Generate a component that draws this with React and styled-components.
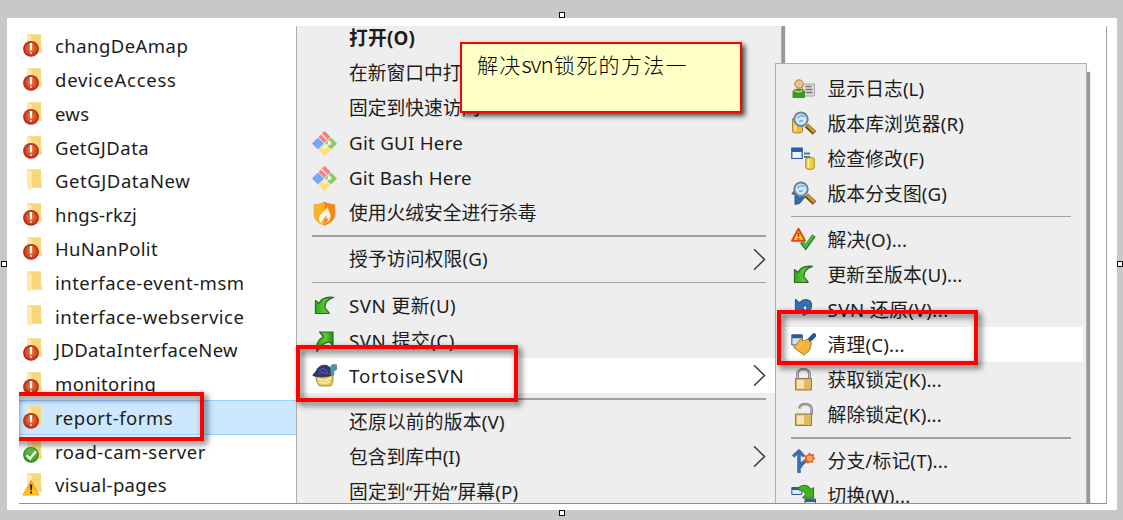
import React from "react";
import styled, { createGlobalStyle, css } from "styled-components";

const Global = createGlobalStyle`
  * { box-sizing: border-box; }
  html, body { margin: 0; padding: 0; background: #c8c8c8; }
  body { font-family: "Noto Sans", "Noto Sans CJK SC", sans-serif; color: #1c1c1c; overflow: hidden; }
  svg { display: block; flex: none; }
`;

const Editor = styled.main`
  position: relative;
  width: 1123px;
  height: 520px;
  padding: 18px 6px 10px 7px;
  background: #c8c8c8;
  overflow: hidden;
`;

const Canvas = styled.div`
  height: 492px;
  padding: 8px 10px 6px 12px;
  background: #fff;
`;

const Capture = styled.section`
  position: relative;
  width: 1088px;
  height: 478px;
  border-right: 1px solid #a0a0a0;
  border-bottom: 1px solid #8f8f8f;
  background: #fff;
  overflow: hidden;
`;

const Handle = styled.i`
  position: absolute;
  left: ${(p) => p.$x}px;
  top: ${(p) => p.$y}px;
  width: 6px;
  height: 6px;
  border: 1px solid #111;
  background: #fff;
`;

const FolderList = styled.ul`
  width: 277px;
  margin: 0;
  padding: 2.5px 0 0;
  list-style: none;
`;

const FolderRow = styled.li`
  display: flex;
  align-items: center;
  gap: 11px;
  height: 33.77px;
  padding-left: 3px;
  border: solid transparent;
  border-width: 1px 0;
  ${(p) => p.$selected && css`
    height: 35px;
    margin-bottom: -1.23px;
    background: #cce8ff;
    border-color: #99d1ff;
  `}
`;

const FolderName = styled.span`
  font-size: 18.5px;
  line-height: 30px;
  white-space: nowrap;
  letter-spacing: ${(p) => p.$track || 0}px;
  transform: translateY(0.9px);
`;

const Menu = styled.div`
  position: absolute;
  left: ${(p) => p.$x}px;
  top: ${(p) => p.$y}px;
  width: ${(p) => p.$w}px;
  height: 560px;
  padding: ${(p) => p.$lead}px 3px;
  background: #eeeeee;
  border: 1.5px solid #b0b0b0;
  box-shadow: 3px 9px 1px 0 #999;
`;

const MenuRow = styled.div`
  display: flex;
  align-items: center;
  height: 35px;
  padding: 0 ${(p) => p.$end}px 0 12px;
  background: ${(p) => (p.$active ? "#fff" : "transparent")};
`;

const IconSlot = styled.span`
  display: flex;
  width: 25px;
  height: 25px;
  margin-right: 12px;
`;

const MenuText = styled.span`
  flex: 1;
  font-size: 18.75px;
  line-height: 30px;
  white-space: nowrap;
  font-weight: ${(p) => (p.$bold ? 700 : 400)};
  letter-spacing: ${(p) => p.$track || 0}px;
`;

const Divider = styled.div`
  display: flex;
  align-items: center;
  height: 11.33px;
  padding: 0 ${(p) => p.$end}px 0 12px;
  &::before { content: ""; flex: 1; height: 1.5px; background: #a2a2a2; }
`;

const RedFrame = styled.div`
  position: absolute;
  left: ${(p) => p.$x}px;
  top: ${(p) => p.$y}px;
  width: ${(p) => p.$w}px;
  height: ${(p) => p.$h}px;
  border: 4px solid #fe0000;
  filter: drop-shadow(3px 3px 3px rgba(0, 0, 0, 0.65));
`;

const Note = styled.div`
  position: absolute;
  left: 441px;
  top: 16px;
  width: 282px;
  height: 71px;
  padding: 5px 15px;
  border: 2.5px solid #f00;
  background: #ffffc8;
  box-shadow: 3px 3px 5px rgba(0, 0, 0, 0.7);
  font-family: "Noto Sans CJK SC", sans-serif;
  font-weight: 300;
  font-size: 21px;
  line-height: 30px;
  letter-spacing: 1.3px;
  white-space: nowrap;
  color: #000;
`;

const NoteLatin = styled.span`
  font-size: 22.5px;
  line-height: 1;
  letter-spacing: -1.2px;
  margin-right: 1.5px;
`;

const Badge = ({ kind }) => {
  if (kind === "modified")
    return (
      <>
        <circle cx="9" cy="15.8" r="7.9" fill="#b52b1b" />
        <circle cx="9" cy="15.8" r="6.6" fill="url(#redBall)" />
        <path d="M7.7 10h2.600l-.5 7.6H8.200z" fill="#fff" />
        <circle cx="9" cy="20" r="1.1" fill="#f3d6cf" />
      </>
    );
  if (kind === "normal")
    return (
      <>
        <circle cx="9" cy="15.8" r="7.9" fill="#2c8a1c" />
        <circle cx="9" cy="15.8" r="6.7" fill="url(#greenBall)" />
        <path d="M4.6 16.2l3.4 3.6 6-7.6" fill="none" stroke="#fff" strokeWidth="2.3" />
      </>
    );
  if (kind === "conflict")
    return (
      <>
        <path d="M9 8.5L17 23H1z" fill="url(#warnTri)" stroke="#e0960c" strokeWidth=".8" strokeLinejoin="round" />
        <path d="M8 12.5h2.2l-.4 6H8.4z" fill="#2a1c00" />
        <circle cx="9.1" cy="20.6" r="1.1" fill="#2a1c00" />
      </>
    );
  return null;
};

const FolderIcon = ({ kind }) => (
  <svg width="22" height="24" viewBox="0 0 22 24">
    <defs>
      <radialGradient id="redBall" cy=".45">
        <stop offset="0" stopColor="#ee8a3c" />
        <stop offset="1" stopColor="#c93a22" />
      </radialGradient>
      <linearGradient id="greenBall" x2="0" y2="1">
        <stop offset="0" stopColor="#68b94f" />
        <stop offset="1" stopColor="#38a71c" />
      </linearGradient>
      <linearGradient id="warnTri" x2="0" y2="1">
        <stop offset="0" stopColor="#ff9c1a" />
        <stop offset="1" stopColor="#ffd21f" />
      </linearGradient>
    </defs>
    <path d="M5 1.3h14v13l1 1.2v4.2H8L5 15z" fill="#f8d77c" />
    <path d="M5 1.3l4.8 2.5v16.4L7.9 22 5 20z" fill="#ffe9a8" />
    <path d="M18 14.5l2 1.2v4h-3z" fill="#fbdc85" />
    <Badge kind={kind} />
  </svg>
);

const Chevron = () => (
  <svg width="13" height="23" viewBox="0 0 13 23">
    <path d="M1 1.2l10.6 10.3L1 21.8" fill="none" stroke="#3a3230" strokeWidth="1.4" />
  </svg>
);

const Lens = () => (
  <>
    <path d="M15.5 14.5l8 7.5" stroke="#6e4a18" strokeWidth="5" />
    <path d="M16.5 14.5l7 6.7" stroke="#d69530" strokeWidth="2.6" />
    <circle cx="10" cy="8.3" r="6.7" fill="#cfe9fa" stroke="#6d8392" strokeWidth="2" />
    <path d="M6.5 7.5c1-3 5-4 7-1.5M8 10.5l4-1" fill="none" stroke="#6aaede" strokeWidth="1.6" />
  </>
);

const glyphs = {
  git: (
    <g transform="rotate(45 12.5 12.5)">
      <rect x="3.6" y="3.6" width="8.6" height="8.6" rx="1" fill="#fb7c7c" />
      <rect x="12.8" y="3.6" width="8.6" height="8.6" rx="1" fill="#8dcd5b" />
      <rect x="3.6" y="12.8" width="8.6" height="8.6" rx="1" fill="#76a8f8" />
      <rect x="12.8" y="12.8" width="8.6" height="8.6" rx="1" fill="#fde07c" />
      <path d="M3.6 8h8M12.5 8h3M15.6 8v7" stroke="#f3efee" strokeWidth="1.5" fill="none" />
      <circle cx="15.8" cy="8.6" r="1.9" fill="#f3efee" />
      <circle cx="15.4" cy="15" r="1.7" fill="#f3efee" />
    </g>
  ),
  shield: (
    <>
      <path d="M12.5.8c3 2 6.500 2.600 10.300 2.700v10.300c0 5-4.500 8.500-10.300 10.700C6.500 22.300 2 18.800 2 13.800V3.500C6 3.400 9.500 2.800 12.500.8z" fill="#fbb321" stroke="#dba56a" strokeWidth=".6" />
      <path d="M12.5.8c3 2 6.500 2.600 10.300 2.700v10.300c0 5-4.500 8.500-10.300 10.700z" fill="#fb8518" />
      <path d="M15.500 4.500c.5 4.500-8 7.500-8.500 12.500-.2 2.500 1 4.200 2.700 5.200-.6-3.500 4-5.200 4.800-8.200.6 1.500.3 2.700-.5 4.200 1.200-.4 1.800-1 2.200-2 .6 2.200-.8 4.500-3 6.100 3.500-1.200 5.200-3.800 5.200-7.300 0-4-2.900-6-2.900-10.500z" fill="#fff8ec" />
    </>
  ),
  update: (
    <path d="M3.5 20.5V7.500l3.300 3C9 6 13.500 3.300 21.500 4.300c-5 1.400-8.500 5.200-8.700 10.300l4.200 5.200v.7z" fill="url(#leaf)" stroke="#2c6a20" strokeWidth="1.2" strokeLinejoin="round" />
  ),
  commit: (
    <path d="M21 4v13.500l-3.800-3.700C12.500 14.500 8.500 17.500 5 23.500 3.500 16.500 6.500 11.500 11.500 8.500L7.500 4z" fill="url(#leaf)" stroke="#2c6a20" strokeWidth="1.2" strokeLinejoin="round" />
  ),
  tortoise: (
    <>
      <path d="M3.5 11h17.500v6.500l-1.500 5-3.500.5H7.500l-3-5z" fill="#e3c95e" stroke="#8c7636" strokeWidth=".8" />
      <path d="M6 15.5c4 2.500 9 2.500 13-.5M7 19c4 1.500 7 1.500 11-.5" stroke="#fff0a4" strokeWidth="1.6" fill="none" />
      <path d="M.8 12.5C2 10 3.500 9.500 4.500 7.500 6.500 3 10.500 1.800 14 2.300c4 .8 6 5 5.800 9.700-5 2.500-14 2.500-19 .5z" fill="#33366e" stroke="#242746" strokeWidth=".8" />
      <path d="M7 8l4-3 3 2 2 4M6 11l4-2 4 2" stroke="#5c64a8" fill="none" />
      <path d="M18.5 9V3.500L20.500 1.500l4 .3v5l-2.700 1V12h-3z" fill="#4e97ae" stroke="#376a80" strokeWidth=".6" />
    </>
  ),
  log: (
    <>
      <path d="M11.5 8h12v12h-12z" fill="#dcdcdc" stroke="#a4a4a4" />
      <path d="M14.5 10.5h6M14.5 13.5h7M14.5 16.5h7" stroke="#777" strokeWidth="1.3" />
      <path d="M2 21.5v-6c.5-3.500 11-3.500 11.500 0v6z" fill="#3d9c17" stroke="#4b7334" strokeWidth=".8" />
      <path d="M3.5 15l4 1 4-1" stroke="#a6dc77" strokeWidth="1.5" fill="none" />
      <circle cx="8" cy="8" r="4.2" fill="#f1c486" stroke="#ad7b50" />
    </>
  ),
  browser: (
    <>
      <path d="M1.5 8c0-2 10-2 10 0v12.500c0 2-10 2-10 0z" fill="#f0bd36" stroke="#9c741f" strokeWidth=".8" />
      <path d="M4.5 10v10.500" stroke="#ffe790" strokeWidth="2" />
      <Lens />
    </>
  ),
  modified: (
    <>
      <path d="M.8 2h10.400v10.500H.8z" fill="#e9f3fa" stroke="#2d5590" strokeWidth="1.2" />
      <path d="M.8 2h10.400v4H.8z" fill="#2c5ca6" />
      <path d="M13 7.500h6M13 11h6" stroke="#467b96" strokeWidth="1.8" />
      <path d="M14.8 12.800c0-1.800 8.400-1.800 8.400 0v9c0 2-8.400 2-8.400 0z" fill="#f4cb3d" stroke="#aa8522" />
      <path d="M17.5 13.500v8.500" stroke="#fff0a0" strokeWidth="2" />
    </>
  ),
  graph: (
    <>
      <path d="M4 23.5V13H.8L6 6l4 7-2.500 1v3l7-1.500-6 7z" fill="#396bab" stroke="#31578e" />
      <Lens />
    </>
  ),
  resolve: (
    <>
      <path d="M10.5 15l4.200 5L23 8.500" stroke="#287c2c" strokeWidth="4.2" fill="none" />
      <path d="M11 15l3.700 4.200L22.500 8.500" stroke="#48ba38" strokeWidth="2.6" fill="none" />
      <path d="M7.5 1.800L14 13.800H1z" fill="#ffd52c" stroke="#e44715" strokeWidth="2" strokeLinejoin="round" />
      <path d="M7.5 5.500v4.200M7.500 11v1.600" stroke="#bd3a0c" strokeWidth="1.8" />
    </>
  ),
  revert: (
    <path d="M4.5 2.500V15h11l-4-4c1-3.500 5-3 4.500.5-.3 2.500-2 4.500-4 7 6-1.500 9-6.500 8.500-11.500C20 2 13 1 8.500 6z" fill="#2f72ba" stroke="#365d88" strokeWidth="1.2" strokeLinejoin="round" />
  ),
  cleanup: (
    <>
      <path d="M.8 2.800h10.500V13H.8z" fill="#cfe2ef" stroke="#35588b" />
      <path d="M.8 2.800h10.500v3.400H.8z" fill="#2e5893" />
      <path d="M17 9.500l6-6" stroke="#245596" strokeWidth="4.5" strokeLinecap="round" />
      <path d="M9.5 7l3 2 4-2 4 4-1 4-1 3.500L13 23 2.500 15.500z" fill="#f0b43e" stroke="#b57c20" />
      <path d="M7 16l4-5" stroke="#f8cb68" strokeWidth="1.200" />
    </>
  ),
  lock: (
    <>
      <path d="M6.5 13V7.500c0-7 12-7 12 0v5.500" fill="none" stroke="#808080" strokeWidth="2.8" />
      <path d="M6.5 12V7.500c0-6 12-6 12 0V12" fill="none" stroke="#c9c9c9" />
      <path d="M4.5 11.500h16v11.500h-16z" fill="#dfb965" stroke="#8f7850" />
      <path d="M6 13h7v8.500H6z" fill="#f6e4b0" />
    </>
  ),
  unlock: (
    <>
      <path d="M8.5 6.500c0-6 12-5.500 12 .5v5.500" fill="none" stroke="#8d8d8d" strokeWidth="3" />
      <path d="M9 6c1-4 11-4 11 1v4" fill="none" stroke="#cacaca" />
      <path d="M4.5 12h16v11.500h-16z" fill="#dfb965" stroke="#8f7850" />
      <path d="M6 13.500h7v8.500H6z" fill="#f6e4b0" />
    </>
  ),
  branch: (
    <>
      <path d="M8 24V4M9 19c0-6 6-5 6.500-9" stroke="#3d6db3" strokeWidth="3.6" fill="none" />
      <path d="M2 7.500l6-5.500 5 5.500" stroke="#3d6db3" strokeWidth="3.2" fill="none" />
      <path d="M18.5 3.500l1.700 2 3-.7-.6 2.900 1.900 2-2.500 1.300v3l-2.900-.8-2.400 1.900-1.200-2.700-2.700-1 1.300-2.500L13 6.500l3-.3z" fill="#ee5b29" />
      <circle cx="18.7" cy="9.300" r="2.8" fill="#ffb450" />
    </>
  ),
  switch: (
    <>
      <path d="M.8 3.500h10v7h-10zM14 15h10.500v10H14z" fill="#dcebf5" stroke="#315c91" />
      <path d="M.8 3.500h10v2.500h-10zM14 15h10.500v3H14z" fill="#315c91" />
      <path d="M6 5.500C10-.5 18 .5 20 5.500l2.500-2v10.500H11.500l3-3.500C13.500 7.500 11 6.500 6 5.500z" fill="#3eb51d" stroke="#2c702a" strokeLinejoin="round" />
    </>
  ),
};

const Glyph = ({ name }) => (
  <svg width="25" height="25" viewBox="0 0 25 25">
    <defs>
      <linearGradient id="leaf">
        <stop offset="0" stopColor="#2fae12" />
        <stop offset=".55" stopColor="#5cc63c" />
        <stop offset="1" stopColor="#239412" />
      </linearGradient>
    </defs>
    {glyphs[name]}
  </svg>
);

const folders = [
  ["changDeAmap", "modified", 0.45],
  ["deviceAccess", "modified", 0.75],
  ["ews", "modified", 0.3],
  ["GetGJData", "modified", 0.45],
  ["GetGJDataNew", null, 0.55],
  ["hngs-rkzj", "modified", 0.22],
  ["HuNanPolit", "modified", 0.33],
  ["interface-event-msm", null, 0.48],
  ["interface-webservice", null, 0.48],
  ["JDDataInterfaceNew", "modified", 0.35],
  ["monitoring", "modified", 0.35],
  ["report-forms", "modified", 0.52],
  ["road-cam-server", "normal", 0.52],
  ["visual-pages", "conflict", 0.33],
];

const explorerItems = [
  { text: "打开(O)", bold: true, track: 0.2 },
  { text: "在新窗口中打开(E)" },
  { text: "固定到快速访问" },
  { text: "Git GUI Here", icon: "git", track: 0.25 },
  { text: "Git Bash Here", icon: "git", track: 0.15 },
  { text: "使用火绒安全进行杀毒", icon: "shield" },
  null,
  { text: "授予访问权限(G)", more: true, track: 0.15 },
  null,
  { text: "SVN 更新(U)", icon: "update", track: 0.45 },
  { text: "SVN 提交(C)", icon: "commit", track: 0.5 },
  { text: "TortoiseSVN", icon: "tortoise", more: true, active: true, track: 0.82 },
  null,
  { text: "还原以前的版本(V)", track: 0.2 },
  { text: "包含到库中(I)", more: true },
  { text: "固定到“开始”屏幕(P)", track: 0.17 },
];

const svnItems = [
  { text: "显示日志(L)", icon: "log", track: 0.1 },
  { text: "版本库浏览器(R)", icon: "browser", track: 0.12 },
  { text: "检查修改(F)", icon: "modified", track: 0.1 },
  { text: "版本分支图(G)", icon: "graph", track: 0.1 },
  null,
  { text: "解决(O)...", icon: "resolve", track: 0.15 },
  { text: "更新至版本(U)...", icon: "update", track: 0.1 },
  { text: "SVN 还原(V)...", icon: "revert", track: 0.45 },
  { text: "清理(C)...", icon: "cleanup", active: true, track: 0.2 },
  { text: "获取锁定(K)...", icon: "lock", track: 0.15 },
  { text: "解除锁定(K)...", icon: "unlock", track: 0.15 },
  null,
  { text: "分支/标记(T)...", icon: "branch", track: 0.18 },
  { text: "切换(W)...", icon: "switch", track: 0.2 },
];

const MenuItems = ({ items, end }) =>
  items.map((item, i) =>
    item ? (
      <MenuRow key={i} $active={item.active} $end={end}>
        <IconSlot>{item.icon && <Glyph name={item.icon} />}</IconSlot>
        <MenuText $bold={item.bold} $track={item.track}>{item.text}</MenuText>
        {item.more && <Chevron />}
      </MenuRow>
    ) : (
      <Divider key={i} $end={end} />
    )
  );

export default function App() {
  return (
    <Editor>
      <Global />
      <Canvas>
        <Capture>
          <FolderList>
            {folders.map(([name, kind, track]) => (
              <FolderRow key={name} $selected={name === "report-forms"}>
                <FolderIcon kind={kind} />
                <FolderName $track={track}>{name}</FolderName>
              </FolderRow>
            ))}
          </FolderList>
          <Menu $x={277} $y={-15} $w={486} $lead={8.5}>
            <MenuItems items={explorerItems} end={12} />
          </Menu>
          <Menu $x={755.5} $y={36.5} $w={312} $lead={7.5}>
            <MenuItems items={svnItems} end={12} />
          </Menu>
          <RedFrame $x={-8} $y={366} $w={193} $h={49} />
          <RedFrame $x={277} $y={319} $w={222} $h={57} />
          <RedFrame $x={758} $y={284} $w={201} $h={55} />
          <Note>
            解决<NoteLatin>svn</NoteLatin>锁死的方法一
          </Note>
        </Capture>
      </Canvas>
      <Handle $x={559} $y={12} />
      <Handle $x={559} $y={510} />
      <Handle $x={1} $y={261} />
      <Handle $x={1117} $y={261} />
    </Editor>
  );
}
